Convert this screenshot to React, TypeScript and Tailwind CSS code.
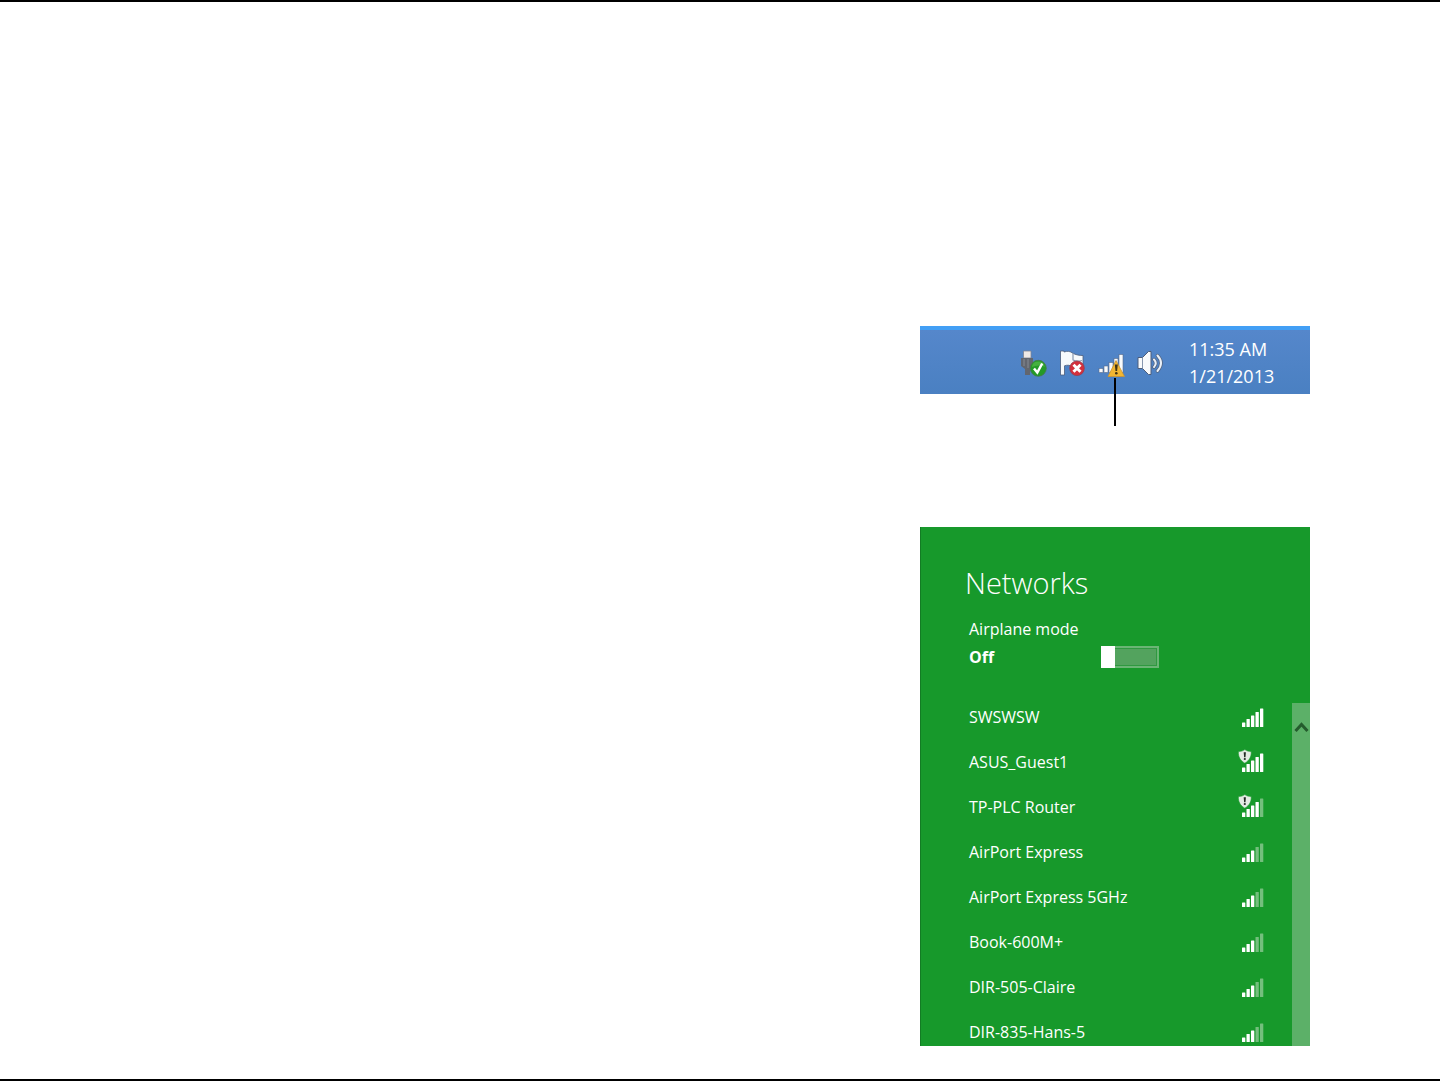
import React from 'react';

interface Network {
  name: string;
  strength: number;
  unsecured?: boolean;
}

const networks: Network[] = [
  { name: 'SWSWSW', strength: 5 },
  { name: 'ASUS_Guest1', strength: 5, unsecured: true },
  { name: 'TP-PLC Router', strength: 4, unsecured: true },
  { name: 'AirPort Express', strength: 3 },
  { name: 'AirPort Express 5GHz', strength: 3 },
  { name: 'Book-600M+', strength: 3 },
  { name: 'DIR-505-Claire', strength: 3 },
  { name: 'DIR-835-Hans-5', strength: 3 },
];

const barTops = [18.5, 15, 11.5, 8, 4.5];

const SignalIcon: React.FC<{ strength: number; unsecured?: boolean }> = ({ strength, unsecured }) => (
  <svg className="h-[26px] w-[26px] shrink-0" viewBox="0 0 26 26" aria-hidden="true">
    {barTops.map((top, i) => (
      <rect
        key={top}
        x={4 + i * 4.5}
        y={top}
        width="3.3"
        height={23 - top}
        rx="0.5"
        fill={i < strength ? '#ffffff' : '#74bf7d'}
      />
    ))}
    {unsecured && (
      <g>
        <path
          d="M6.8 .6C8.6 1.9 10.7 2.5 13.2 2.5 13.6 7.8 11.2 11.6 6.8 14.2 2.4 11.6 0 7.8 .4 2.5 2.9 2.5 5 1.9 6.8 .6Z"
          fill="#e4ebe4"
          stroke="#17992b"
          strokeWidth="0.6"
        />
        <path d="M5.7 3.2h2.2l-.4 5h-1.4z" fill="#222a24" />
        <circle cx="6.8" cy="10" r="1.1" fill="#222a24" />
      </g>
    )}
  </svg>
);

const UsbIcon = () => (
  <svg className="h-7 w-7" viewBox="0 0 28 28" aria-hidden="true">
    <path d="M3.5 1h7.500v7h-7.500z" fill="#efe9e6" stroke="#7f8492" strokeWidth="0.8" />
    <path d="M1 8h12v8l-3 3v6H5v-6l-4-3z" fill="#62666f" />
    <path d="M4 9v7M8 9v9" stroke="#858b96" strokeWidth="1" />
    <circle cx="18.3" cy="18.3" r="8" fill="#239a27" stroke="#45784a" strokeWidth="0.8" />
    <path d="M11.8 17a6.6 6.6 0 0 1 13 0c-3.5-2-8.5-2-13 0z" fill="#45b03f" />
    <path d="M14 18.500l3.300 4 4.900-9" fill="none" stroke="#fff" strokeWidth="2.500" />
  </svg>
);

const FlagIcon = () => (
  <svg className="h-7 w-7" viewBox="0 0 28 28" aria-hidden="true">
    <path
      d="M1.5 1h3.5v1c4-1.300 6-.6 8.500 1 3.200 2 7 2.500 10.500 2.500v12c-4 1-7.500.5-10.500-.9-3-1.700-5.500-1.700-8-.8V25H1.500z"
      fill="#f8fafc"
      stroke="#4c5d7b"
      strokeWidth="0.8"
    />
    <path d="M14 3v7c3 1.500 6 1.500 9 .5" fill="none" stroke="#8797af" strokeWidth="1.2" />
    <circle cx="18" cy="18.3" r="7.3" fill="#d32f3c" stroke="#963e50" strokeWidth="0.8" />
    <path d="M14.5 14.8l7 7m0-7l-7 7" stroke="#fff" strokeWidth="3" />
  </svg>
);

const TrayWifiIcon = () => (
  <svg className="h-7 w-7" viewBox="0 0 28 28" aria-hidden="true">
    {[18.5, 16, 12.5, 8.5, 4.5].map((top, i) => (
      <rect
        key={top}
        x={1 + i * 5}
        y={top}
        width="4"
        height={22.5 - top}
        fill="#f8fafc"
        stroke="#596b89"
        strokeWidth="0.6"
      />
    ))}
    <path d="M18 10.5L26.500 26.500H10z" fill="#f2b632" stroke="#c99435" strokeWidth="0.8" strokeLinejoin="round" />
    <path d="M16.8 14.5h3l-.7 6.500h-1.600z" fill="#403416" />
    <circle cx="18.3" cy="23.2" r="1.3" fill="#403416" />
  </svg>
);

const SpeakerIcon = () => (
  <svg className="h-7 w-7" viewBox="0 0 28 28" aria-hidden="true">
    <path
      d="M1 7.500h4.500l6-6h2.500v23h-2.500l-6-6H1z"
      fill="#f8fafc"
      stroke="#4c5d7b"
      strokeWidth="1"
    />
    <path d="M5.5 8v10" stroke="#8797af" strokeWidth="1" />
    <g fill="none" strokeLinecap="round">
      <path d="M17 9.500q3.500 3.800 0 7.600M20.500 5.500q7 7.500 0 15.500" stroke="#53647f" strokeWidth="3.500" />
      <path d="M17 9.500q3.500 3.800 0 7.600M20.500 5.500q7 7.500 0 15.500" stroke="#e8eff7" strokeWidth="2" />
    </g>
  </svg>
);

const Taskbar = () => (
  <div className="flex h-[68px] w-[390px] items-center border-t-4 border-[#429ff5] bg-linear-to-b from-[#5587cb] to-[#4a80c2] pl-[100px] text-white">
    <div className="flex gap-[11px] pt-1">
      <button type="button" aria-label="Safely remove hardware">
        <UsbIcon />
      </button>
      <button type="button" aria-label="Action center">
        <FlagIcon />
      </button>
      <button type="button" aria-label="Network" className="relative">
        <TrayWifiIcon />
        {/* Callout line */}
        <span className="absolute top-full left-4 h-12 w-0.5 bg-black"></span>
      </button>
      <button type="button" aria-label="Volume">
        <SpeakerIcon />
      </button>
    </div>
    <div className="pt-0.5 pl-6 text-lg leading-[27px]">
      <p>11:35 AM</p>
      <p>1/21/2013</p>
    </div>
  </div>
);

const NetworksPanel = () => (
  <section className="w-[390px] border-l border-[#137c24] bg-[#17992b] pt-9 text-white">
    <h1 className="pl-11 text-[29px] leading-10 font-light">Networks</h1>
    <div className="pt-3.5 pl-12">
      <label htmlFor="airplane" className="block leading-6">
        Airplane mode
      </label>
      <div className="flex items-center pt-1">
        <span className="w-[132px] leading-6 font-bold">Off</span>
        <input
          id="airplane"
          type="checkbox"
          role="switch"
          className="relative h-[22px] w-[58px] appearance-none border-2 border-[#6bb575] bg-[#53a35e] outline-1 -outline-offset-3 outline-[#2f9940] before:absolute before:-top-0.5 before:-left-0.5 before:h-[22px] before:w-3.5 before:bg-white"
        />
      </div>
    </div>
    <div className="flex pt-[34px]">
      <ul className="flex flex-1 flex-col gap-[17px] pr-7 pl-12">
        {networks.map((network) => (
          <li key={network.name}>
            <button type="button" className="flex h-7 w-full items-center justify-between">
              <span>{network.name}</span>
              <SignalIcon strength={network.strength} unsecured={network.unsecured} />
            </button>
          </li>
        ))}
      </ul>
      {/* Scrollbar */}
      <div className="w-[18px] bg-[#5cb068] pt-4">
        <button type="button" aria-label="Scroll up" className="block">
          <svg className="h-4 w-[18px]" viewBox="0 0 18 16" aria-hidden="true">
            <path d="M3.5 12L9.5 5.5 15.5 12" fill="none" stroke="#245c2d" strokeWidth="3" />
          </svg>
        </button>
      </div>
    </div>
  </section>
);

export default function App() {
  return (
    <main className="flex min-h-screen flex-col items-end border-y-2 border-black bg-white pt-[324px] pr-[130px] pb-[33px] font-['Open_Sans','Noto_Sans',sans-serif] text-base">
      <Taskbar />
      <div className="pt-[133px]">
        <NetworksPanel />
      </div>
    </main>
  );
}
